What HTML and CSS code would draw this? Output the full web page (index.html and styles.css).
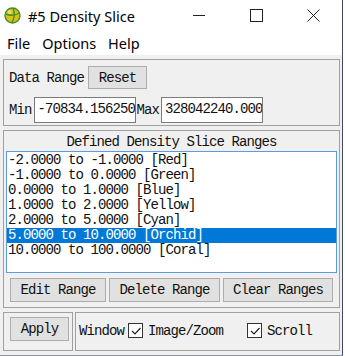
FILE: index.html
```html
<!DOCTYPE html>
<html lang="en">
<head>
    <meta charset="UTF-8">
    <title>#5 Density Slice</title>
    <link rel="stylesheet" href="styles.css">
</head>
<body>
    <div class="window">
        <div class="titlebar">
            <svg class="app-icon" width="17" height="17" viewBox="0 0 17 17">
                <circle cx="8.5" cy="8.5" r="7.5" fill="#d8c21a" stroke="#3f8f2a" stroke-width="1.4"/>
                <path d="M1.5 7 Q8.5 10 15.5 6" fill="none" stroke="#3f8f2a" stroke-width="1.4"/>
                <path d="M9 1.2 Q12 8 8 15.8" fill="none" stroke="#3f8f2a" stroke-width="1.4"/>
                <circle cx="5.5" cy="5" r="2" fill="#f3e77a" opacity="0.8"/>
            </svg>
            <span class="title">#5 Density Slice</span>
            <div class="controls">
                <div class="ctl ctl-min"><span class="min-line"></span></div>
                <div class="ctl ctl-max"><span class="max-box"></span></div>
                <div class="ctl ctl-close">
                    <svg width="13" height="13" viewBox="0 0 13 13">
                        <path d="M0.5 0.5 L12.5 12.5 M12.5 0.5 L0.5 12.5" stroke="#222" stroke-width="1"/>
                    </svg>
                </div>
            </div>
        </div>

        <div class="menubar">
            <span class="menu-item">File</span>
            <span class="menu-item">Options</span>
            <span class="menu-item">Help</span>
        </div>

        <div class="content">
            <div class="frame range-frame">
                <div class="range-row">
                    <span class="label">Data Range</span>
                    <div class="btn reset-btn">Reset</div>
                </div>
                <div class="range-row">
                    <span class="label">Min</span>
                    <div class="field">-70834.156250</div>
                    <span class="label">Max</span>
                    <div class="field">328042240.000000</div>
                </div>
            </div>

            <div class="frame slice-frame">
                <div class="frame-title">Defined Density Slice Ranges</div>
                <div class="listbox">
                    <div class="list-item">-2.0000 to -1.0000 [Red]</div>
                    <div class="list-item">-1.0000 to 0.0000 [Green]</div>
                    <div class="list-item">0.0000 to 1.0000 [Blue]</div>
                    <div class="list-item">1.0000 to 2.0000 [Yellow]</div>
                    <div class="list-item">2.0000 to 5.0000 [Cyan]</div>
                    <div class="list-item selected">5.0000 to 10.0000 [Orchid]</div>
                    <div class="list-item">10.0000 to 100.0000 [Coral]</div>
                </div>
                <div class="btn-row">
                    <div class="btn edit-btn">Edit Range</div>
                    <div class="btn delete-btn">Delete Range</div>
                    <div class="btn clear-btn">Clear Ranges</div>
                </div>
            </div>

            <div class="bottom-row">
                <div class="frame apply-frame">
                    <div class="btn apply-btn">Apply</div>
                </div>
                <div class="frame window-frame">
                    <span class="label">Window</span>
                    <span class="check"><svg width="12" height="12" viewBox="0 0 12 12"><path d="M2 6 L5 9 L10.5 3" fill="none" stroke="#222" stroke-width="1.2"/></svg></span>
                    <span class="label image-label">Image/Zoom</span>
                    <span class="check scroll-check"><svg width="12" height="12" viewBox="0 0 12 12"><path d="M2 6 L5 9 L10.5 3" fill="none" stroke="#222" stroke-width="1.2"/></svg></span>
                    <span class="label">Scroll</span>
                </div>
            </div>
        </div>
    </div>
</body>
</html>
```

FILE: styles.css
```css
html, body {
    margin: 0;
    padding: 0;
}

body {
    width: 345px;
    height: 356px;
    background: #ffffff;
    overflow: hidden;
}

.window {
    width: 342px;
    height: 355px;
    background: #f0f0f0;
    border-right: 1px solid #3e4a62;
    border-bottom: 1px solid #8a93a6;
}

/* Title bar */
.titlebar {
    height: 31px;
    background: #ffffff;
    display: flex;
    align-items: center;
}

.app-icon {
    margin-left: 4px;
    margin-top: -1px;
}

.title {
    margin-left: 7px;
    font-family: "Noto Sans", sans-serif;
    font-size: 14.5px;
    color: #000;
}

.controls {
    margin-left: auto;
    display: flex;
    height: 31px;
}

.ctl {
    display: flex;
    align-items: center;
    justify-content: center;
    height: 31px;
}

.ctl-min { width: 58px; }
.ctl-max { width: 56px; }
.ctl-close { width: 58px; }

.min-line {
    width: 12px;
    height: 1px;
    background: #222;
}

.max-box {
    width: 11px;
    height: 11px;
    border: 1px solid #222;
}

/* Menu */
.menubar {
    height: 24px;
    background: #ffffff;
    display: flex;
    align-items: center;
    padding-left: 7px;
    gap: 12px;
    font-family: "Noto Sans", sans-serif;
    font-size: 14.5px;
}

/* Body */
.content {
    padding: 4px 2px 0 3px;
    font-family: "Liberation Mono", monospace;
    font-size: 14px;
    letter-spacing: -0.9px;
    color: #111;
}

.frame {
    border: 1px solid #a0a0a0;
    box-sizing: border-box;
}

.range-frame {
    height: 67px;
    padding: 6px 0 0 5px;
}

.range-row {
    display: flex;
    align-items: center;
}

.range-row:first-child {
    height: 23px;
    margin-bottom: 8px;
}

.range-row + .range-row {
    height: 26px;
}

.btn {
    box-sizing: border-box;
    background: #e1e1e1;
    border: 1px solid #adadad;
    display: flex;
    align-items: center;
    justify-content: center;
    height: 24px;
}

.reset-btn {
    width: 59px;
    height: 23px;
    margin-left: 4px;
}

.field {
    box-sizing: border-box;
    width: 102px;
    height: 26px;
    background: #fff;
    border: 1px solid #7a7a7a;
    padding: 3px 0 0 3px;
    white-space: nowrap;
    overflow: hidden;
    margin: 0 1px 0 2px;
}

.slice-frame {
    margin-top: 4px;
    height: 178px;
    padding: 0 2px 5px 2px;
}

.frame-title {
    height: 20px;
    line-height: 20px;
    text-align: center;
    padding-top: 1px;
    box-sizing: border-box;
}

.listbox {
    box-sizing: border-box;
    height: 122px;
    background: #fff;
    border: 1px solid #5c9de0;
    padding-top: 1px;
}

.list-item {
    height: 15px;
    line-height: 15px;
    padding-left: 1px;
    white-space: nowrap;
}

.list-item.selected {
    background: #0078d7;
    color: #fff;
}

.btn-row {
    display: flex;
    gap: 3px;
    margin-top: 5px;
    padding-left: 4px;
}

.edit-btn { width: 96px; }
.delete-btn { width: 111px; }
.clear-btn { width: 110px; }

.bottom-row {
    display: flex;
    gap: 2px;
    margin-top: 4px;
    height: 39px;
}

.apply-frame {
    width: 70px;
    padding: 4px 0 0 6px;
}

.apply-btn {
    width: 59px;
}

.window-frame {
    flex: 1;
    display: flex;
    align-items: center;
    padding-left: 3px;
    padding-bottom: 2px;
}

.check {
    box-sizing: border-box;
    width: 15px;
    height: 15px;
    border: 1px solid #333;
    background: #fff;
    display: flex;
    align-items: center;
    justify-content: center;
    margin: 0 5px 0 4px;
}

.scroll-check {
    margin-left: 24px;
}
```
